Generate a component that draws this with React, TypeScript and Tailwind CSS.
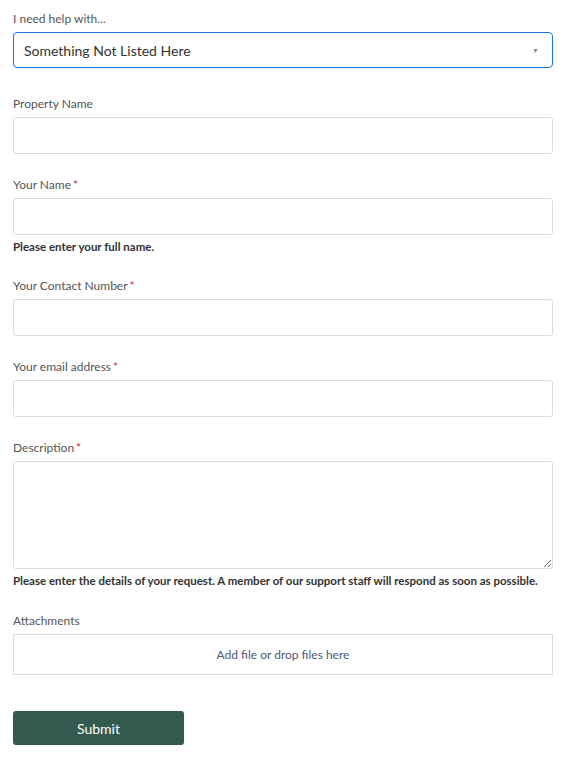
interface FieldProps {
  label: string;
  required?: boolean;
  help?: string;
  className?: string;
  children: React.ReactNode;
}

const Field = ({ label, required, help, className, children }: FieldProps) => {
  return (
    <div className={className}>
      <label className="mb-[4px] block text-[12px] leading-[18px] text-[#555]">
        {label}
        {required && <span className="ml-[2px] text-[#e0242c]">*</span>}
      </label>
      {children}
      {help && (
        <p className="mt-[4px] text-[11.5px] font-bold leading-[16px] text-[#333]">
          {help}
        </p>
      )}
    </div>
  );
};

const inputClass =
  "block h-[37px] w-full rounded-[3px] border border-[#dcdcdc] bg-white px-2 text-[13px] outline-none";

export default function App() {
  return (
    <div
      className="min-h-[768px] w-full bg-white pl-[13px] pt-[10px]"
      style={{ fontFamily: 'Lato, "Noto Sans", Arial, sans-serif' }}
    >
      <div className="w-[540px]">
        <Field label="I need help with...">
          <div className="flex h-[36px] w-full items-center rounded-[4px] border border-[#1a73e8] bg-white pl-[10px] pr-[13px]">
            <span className="flex-1 text-[14px] text-[#333]">
              Something Not Listed Here
            </span>
            <span className="text-[7px] leading-none text-[#888]">▼</span>
          </div>
        </Field>

        <Field label="Property Name" className="mt-[27px]">
          <input className={inputClass} />
        </Field>

        <Field
          label="Your Name"
          required
          help="Please enter your full name."
          className="mt-[22px]"
        >
          <input className={inputClass} />
        </Field>

        <Field label="Your Contact Number" required className="mt-[22px]">
          <input className={inputClass} />
        </Field>

        <Field label="Your email address" required className="mt-[22px]">
          <input className={inputClass} />
        </Field>

        <Field
          label="Description"
          required
          help="Please enter the details of your request. A member of our support staff will respond as soon as possible."
          className="mt-[22px]"
        >
          <textarea className="block h-[108px] w-full resize-y rounded-[3px] border border-[#dcdcdc] bg-white px-2 py-1 text-[13px] outline-none" />
        </Field>

        <Field label="Attachments" className="mt-[23px]">
          <div className="flex h-[41px] w-full items-center justify-center border border-[#dcdcdc] bg-white text-[12px] text-[#4a5878]">
            Add file or drop files here
          </div>
        </Field>

        <button className="mt-[36px] h-[34px] w-[171px] rounded-[3px] bg-[#335a4e] text-[14px] text-white">
          Submit
        </button>
      </div>
    </div>
  );
}
